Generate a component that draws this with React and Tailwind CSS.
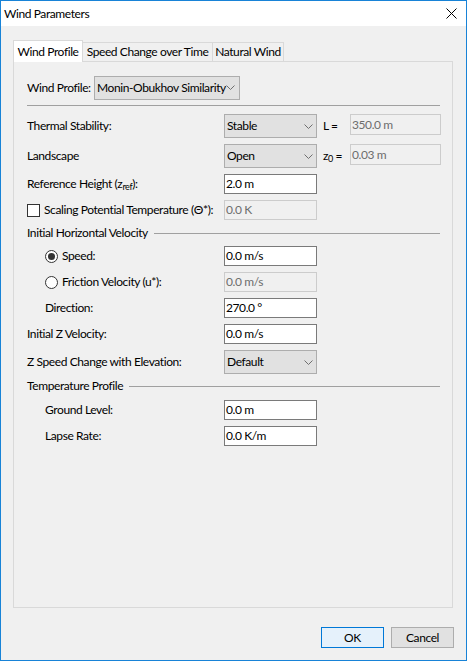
import React from "react";

function Chevron() {
  return (
    <svg width="9" height="5" viewBox="0 0 9 5" className="shrink-0">
      <path d="M0.5 0.5 L4.5 4.5 L8.5 0.5" fill="none" stroke="#6f6f6f" strokeWidth="1" />
    </svg>
  );
}

function Combo({ value, className = "" }) {
  return (
    <div className={`h-[24px] bg-[#e1e1e1] border border-[#adadad] flex items-center justify-between pl-[2px] pr-[3px] ${className}`}>
      <span>{value}</span>
      <Chevron />
    </div>
  );
}

function TextBox({ value, disabled = false, className = "w-[93px]" }) {
  return (
    <div className={`h-[20px] border flex items-center pl-[1px] ${disabled ? "bg-[#f0f0f0] border-[#cccccc] text-[#6d6d6d]" : "bg-white border-[#7a7a7a]"} ${className}`}>
      {value}
    </div>
  );
}

function Row({ label, indent = false, children, className = "", h = "h-[20px]" }) {
  return (
    <div className={`flex items-center ${h} ${className}`}>
      <div className={`w-[197px] shrink-0 ${indent ? "pl-[18px]" : ""}`}>{label}</div>
      {children}
    </div>
  );
}

function GroupHeader({ title, className = "" }) {
  return (
    <div className={`flex items-center h-[16px] pr-[12px] ${className}`}>
      <span className="pr-[6px]">{title}</span>
      <div className="flex-1 h-px bg-[#a0a0a0]" />
    </div>
  );
}

export default function App() {
  return (
    <div className="w-[467px] h-[661px] border border-[#1883d7] bg-[#f0f0f0] flex flex-col text-[12px] tracking-[-0.4px] text-black leading-none whitespace-nowrap font-['Lato',sans-serif]">
      {/* title bar */}
      <div className="h-[25px] bg-white flex items-center justify-between pl-[3px] pr-[9px] shrink-0">
        <span>Wind Parameters</span>
        <svg width="11" height="11" viewBox="0 0 11 11">
          <path d="M0.5 0.5 L10.5 10.5 M10.5 0.5 L0.5 10.5" stroke="#000" strokeWidth="1" />
        </svg>
      </div>

      {/* tabs */}
      <div className="flex items-end pl-[12px] mt-[13px] h-[22px] shrink-0">
        <div className="h-[22px] w-[70px] bg-white border border-b-0 border-[#d9d9d9] flex items-center justify-center relative z-10 -mb-px">
          Wind Profile
        </div>
        <div className="h-[19px] w-[130px] border border-l-0 border-b-0 border-[#d9d9d9] flex items-center justify-center">
          Speed Change over Time
        </div>
        <div className="h-[19px] w-[71px] border border-l-0 border-b-0 border-[#d9d9d9] flex items-center justify-center">
          Natural Wind
        </div>
      </div>

      {/* tab page */}
      <div className="ml-[12px] w-[440px] h-[547px] border border-[#d9d9d9] bg-[#f0f0f0] pl-[13px] flex flex-col shrink-0">
        <div className="flex items-center h-[23px] mt-[14px]">
          <span className="w-[67px] shrink-0">Wind Profile:</span>
          <Combo value="Monin-Obukhov Similarity" className="w-[146px] h-[23px] pr-[6px]" />
        </div>
        <div className="h-px bg-[#a0a0a0] mt-[6px] mr-[12px]" />

        <Row label="Thermal Stability:" h="h-[24px]" className="mt-[8px]">
          <Combo value="Stable" className="w-[93px]" />
          <span className="w-[33px] pl-[6px] shrink-0">L =</span>
          <TextBox value="350.0 m" disabled className="w-[91px] h-[21px] -mt-[3px]" />
        </Row>
        <Row label="Landscape" h="h-[24px]" className="mt-[6px]">
          <Combo value="Open" className="w-[93px]" />
          <span className="w-[33px] pl-[6px] shrink-0">
            z<sub className="text-[9px]">0</sub> =
          </span>
          <TextBox value="0.03 m" disabled className="w-[91px] h-[21px] -mt-[3px]" />
        </Row>
        <Row label={<span>Reference Height (z<sub className="text-[9px]">ref</sub>):</span>} className="mt-[6px]">
          <TextBox value="2.0 m" />
        </Row>
        <Row
          label={
            <span className="flex items-center">
              <span className="w-[13px] h-[13px] border border-[#333] bg-white mr-[4px] shrink-0" />
              Scaling Potential Temperature (Θ*):
            </span>
          }
          className="mt-[6px]"
        >
          <TextBox value="0.0 K" disabled />
        </Row>

        <GroupHeader title="Initial Horizontal Velocity" className="mt-[5px]" />

        <Row
          indent
          label={
            <span className="flex items-center">
              <span className="w-[13px] h-[13px] rounded-full border border-[#333] bg-white flex items-center justify-center mr-[4px] shrink-0">
                <span className="w-[7px] h-[7px] rounded-full bg-[#333]" />
              </span>
              Speed:
            </span>
          }
          className="mt-[5px]"
        >
          <TextBox value="0.0 m/s" />
        </Row>
        <Row
          indent
          label={
            <span className="flex items-center">
              <span className="w-[13px] h-[13px] rounded-full border border-[#333] bg-white mr-[4px] shrink-0" />
              Friction Velocity (u*):
            </span>
          }
          className="mt-[6px]"
        >
          <TextBox value="0.0 m/s" disabled />
        </Row>
        <Row indent label="Direction:" className="mt-[6px]">
          <TextBox value="270.0 °" />
        </Row>
        <Row label="Initial Z Velocity:" className="mt-[6px]">
          <TextBox value="0.0 m/s" />
        </Row>
        <Row label="Z Speed Change with Elevation:" h="h-[24px]" className="mt-[6px]">
          <Combo value="Default" className="w-[93px]" />
        </Row>

        <GroupHeader title="Temperature Profile" className="mt-[4px]" />

        <Row indent label="Ground Level:" className="mt-[6px]">
          <TextBox value="0.0 m" />
        </Row>
        <Row indent label="Lapse Rate:" className="mt-[6px]">
          <TextBox value="0.0 K/m" />
        </Row>
      </div>

      {/* buttons */}
      <div className="flex justify-end gap-[7px] pr-[12px] mt-[19px]">
        <button className="w-[63px] h-[21px] bg-[#e5f1fb] border border-[#0078d7] leading-none">OK</button>
        <button className="w-[63px] h-[21px] bg-[#e1e1e1] border border-[#adadad] leading-none">Cancel</button>
      </div>
    </div>
  );
}
